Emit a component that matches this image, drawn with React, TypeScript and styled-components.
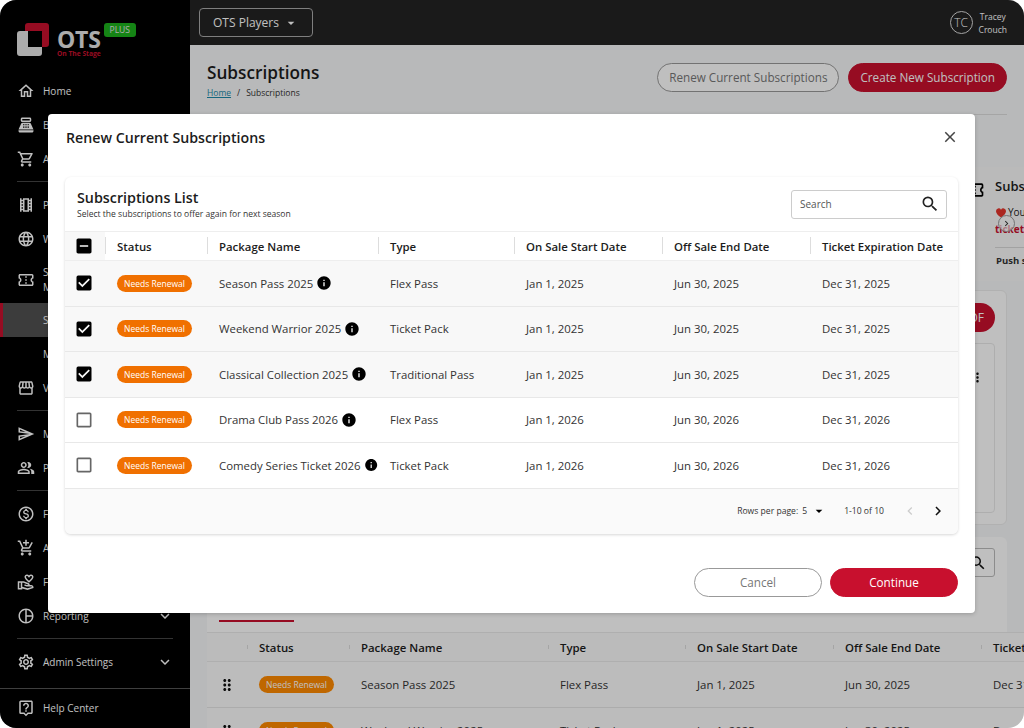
import { ReactNode } from "react";
import styled, { createGlobalStyle } from "styled-components";
import {
  MdOutlineHome,
  MdOutlinePointOfSale,
  MdOutlineShoppingCart,
  MdOutlineLocalMovies,
  MdOutlineLanguage,
  MdOutlineConfirmationNumber,
  MdOutlineStorefront,
  MdOutlineSend,
  MdOutlinePeopleAlt,
  MdOutlineMonetizationOn,
  MdOutlineAddShoppingCart,
  MdOutlineVolunteerActivism,
  MdOutlinePieChart,
  MdOutlineSettings,
  MdOutlineLiveHelp,
  MdExpandMore,
  MdArrowDropDown,
  MdSearch,
  MdClose,
  MdInfo,
  MdCheckBox,
  MdCheckBoxOutlineBlank,
  MdIndeterminateCheckBox,
  MdChevronLeft,
  MdChevronRight,
  MdDragIndicator,
  MdMoreVert,
} from "react-icons/md";

const GlobalStyle = createGlobalStyle`
  html, body {
    margin: 0;
    background: #fff;
    font-family: "Open Sans", "Liberation Sans", sans-serif;
  }
  * { box-sizing: border-box; }
`;

const Frame = styled.div`
  position: relative;
  display: flex;
  width: 1024px;
  height: 728px;
  border-radius: 16px;
  overflow: hidden;
  background: #f6f7f8;
`;

/* sidebar */
const Sidebar = styled.aside`
  display: flex;
  flex-direction: column;
  flex: 0 0 190px;
  background: #000;
  color: #fff;
`;
const LogoArea = styled.div`
  display: flex;
  height: 74px;
  padding: 23px 0 0 17px;
  flex: none;
`;
const LogoWords = styled.div`
  display: flex;
  flex-direction: column;
  margin: 5px 0 0 7px;
`;
const LogoName = styled.span`
  font-size: 23px;
  line-height: 22px;
  font-weight: 700;
  letter-spacing: -0.2px;
  color: #e6e6e6;
`;
const LogoTag = styled.span`
  font-size: 6.7px;
  line-height: 8px;
  font-weight: 700;
  color: #c8102e;
`;
const PlusBadge = styled.span`
  align-self: flex-start;
  margin-left: 3px;
  width: 32px;
  height: 14px;
  border-radius: 3px;
  background: #1cb01c;
  color: #e6e6e6;
  font-size: 8.5px;
  line-height: 14px;
  text-align: center;
`;
const NavItem = styled.div<{ $active?: boolean; $tall?: boolean }>`
  position: relative;
  display: flex;
  align-items: center;
  flex: none;
  height: ${(p) => (p.$tall ? "47px" : "34px")};
  padding: 0 16px 0 17px;
  gap: 8px;
  background: ${(p) => (p.$active ? "#505050" : "transparent")};
  box-shadow: ${(p) => (p.$active ? "inset 3px 0 0 #c8102e" : "none")};
  font-size: 10px;
  line-height: 15px;
  svg {
    flex: none;
  }
`;
const NavLabel = styled.span<{ $inset?: boolean }>`
  flex: 1;
  white-space: pre-line;
  margin-left: ${(p) => (p.$inset ? "26px" : "0")};
`;
const NavRule = styled.hr`
  flex: none;
  width: 156px;
  height: 1px;
  margin: 5px 0 6px 17px;
  border: 0;
  background: #444;
`;
const HelpArea = styled.div`
  margin-top: auto;
  border-top: 1px solid #555;
  padding-top: 2px;
  height: 40px;
`;

const Nav = ({
  icon,
  label,
  more,
  tall,
}: {
  icon: ReactNode;
  label: string;
  more?: boolean;
  tall?: boolean;
}) => (
  <NavItem $tall={tall}>
    {icon}
    <NavLabel>{label}</NavLabel>
    {more && <MdExpandMore size={18} />}
  </NavItem>
);

/* page under the dialog */
const Main = styled.div`
  display: flex;
  flex-direction: column;
  flex: 1;
  min-width: 0;
  overflow: hidden;
`;
const TopBar = styled.header`
  display: flex;
  align-items: center;
  justify-content: space-between;
  flex: none;
  height: 45px;
  padding: 0 17px 0 9px;
  background: #232323;
  color: #fff;
`;
const PlayersButton = styled.div`
  display: flex;
  align-items: center;
  justify-content: center;
  gap: 4px;
  width: 114px;
  height: 29px;
  border: 1px solid #aaa;
  border-radius: 4px;
  font-size: 12px;
`;
const UserBox = styled.div`
  display: flex;
  align-items: center;
  gap: 6px;
`;
const Avatar = styled.div`
  display: flex;
  align-items: center;
  justify-content: center;
  width: 23px;
  height: 23px;
  border: 1px solid #ddd;
  border-radius: 50%;
  font-size: 12px;
  font-weight: 300;
`;
const UserName = styled.div`
  font-size: 8.5px;
  line-height: 13px;
  text-align: center;
`;
const Content = styled.div`
  padding: 0 17px;
`;
const PageHead = styled.div`
  display: flex;
  align-items: flex-start;
  justify-content: space-between;
  height: 70px;
  padding-top: 17px;
  border-bottom: 1px solid #dcdcdc;
`;
const PageTitle = styled.h1`
  margin: 0;
  font-size: 17.2px;
  line-height: 22px;
  font-weight: 600;
  color: #1c1c1c;
`;
const Crumbs = styled.div`
  font-size: 8.5px;
  line-height: 14px;
  margin-top: 2px;
  color: #333;
  a {
    color: #1c8aa8;
    text-decoration: underline;
    margin-right: 6px;
  }
  span {
    margin-right: 6px;
  }
`;
const HeadActions = styled.div`
  display: flex;
  gap: 9px;
  margin-top: 1px;
`;
const Pill = styled.div<{ $variant: "outline" | "solid"; $wide?: boolean }>`
  display: flex;
  align-items: center;
  justify-content: center;
  flex: none;
  height: 29px;
  padding: 0 ${(p) => (p.$wide ? "0" : "11px")} 2px;
  width: ${(p) => (p.$wide ? "128px" : "auto")};
  border-radius: 15px;
  font-size: 11.7px;
  font-weight: 500;
  white-space: nowrap;
  background: ${(p) => (p.$variant === "solid" ? "#c8102e" : "#fff")};
  color: ${(p) => (p.$variant === "solid" ? "#fff" : "#777")};
  border: 1px solid ${(p) => (p.$variant === "solid" ? "#c8102e" : "#999")};
`;
const SummaryStrip = styled.div`
  position: relative;
  display: flex;
  justify-content: flex-end;
  height: 114px;
  margin: 52px -17px 0 0;
  background: #f8f8f8;
  padding: 10px 0 0;
`;
const SummaryCard = styled.div`
  width: 29px;
  overflow: hidden;
  white-space: nowrap;
  color: #1c1c1c;
`;
const SummaryTitle = styled.div`
  font-size: 13px;
  line-height: 18px;
  font-weight: 600;
  margin-bottom: 11px;
`;
const SummaryText = styled.div`
  display: flex;
  align-items: center;
  font-size: 10px;
  line-height: 13px;
  gap: 2px;
  padding-left: 1px;
`;
const SummaryLink = styled.div`
  font-size: 10px;
  line-height: 14px;
  font-weight: 700;
  color: #c8102e;
  margin-top: 3px;
`;
const SummaryPush = styled.div`
  margin: 11px 0 0;
  padding: 7px 0 0 1px;
  border-top: 1px solid #d8d8d8;
  font-size: 9.5px;
  font-weight: 700;
  line-height: 12px;
  color: #333;
`;
const SummaryIcon = styled.div`
  margin: 3px 10px 0 0;
  color: #000;
`;
const ScrollButton = styled.div`
  position: absolute;
  top: 48px;
  right: 9px;
  display: flex;
  align-items: center;
  justify-content: center;
  width: 17px;
  height: 17px;
  border-radius: 50%;
  border: 1px solid #999;
  background: rgba(255, 255, 255, 0.6);
  color: #333;
`;
const Panel = styled.section`
  margin-top: 9px;
  height: 235px;
  padding: 12px 11px 11px;
  border-radius: 6px;
  background: #fff;
  border: 1px solid #ececec;
  display: flex;
  flex-direction: column;
  align-items: flex-end;
`;
const PanelCard = styled.div`
  display: flex;
  justify-content: flex-end;
  align-self: stretch;
  flex: 1;
  margin-top: 11px;
  padding: 26px 9px 0 0;
  border: 1px solid #e8e8e8;
  border-radius: 4px;
  color: #111;
`;
const PanelButton = styled.div`
  height: 29px;
  width: 100px;
  padding-right: 11px;
  border-radius: 15px;
  background: #c8102e;
  color: #fff;
  font-size: 12px;
  line-height: 29px;
  text-align: right;
`;
const ListCard = styled.section`
  margin-top: 12px;
  background: #fff;
  border-radius: 6px 6px 0 0;
  padding-top: 11px;
  height: 191px;
  overflow: visible;
`;
const ListTools = styled.div`
  display: flex;
  justify-content: flex-end;
  padding-right: 12px;
`;
const MiniSearch = styled.div`
  display: flex;
  align-items: center;
  justify-content: flex-end;
  width: 140px;
  height: 29px;
  padding-right: 7px;
  border: 1px solid #bbb;
  border-radius: 3px;
  color: #111;
`;
const TabMark = styled.div`
  width: 75px;
  height: 2px;
  margin: 43px 0 10px 12px;
  background: #c8102e;
`;
const BackGrid = styled.div`
  display: grid;
  grid-template-columns: 40px 102px 199px 137px 148px 148px 148px;
  width: 922px;
`;
const BackHeadRow = styled(BackGrid)`
  height: 30px;
  align-items: center;
  background: #fafafa;
  border-top: 1px solid #eaeaea;
  border-bottom: 1px solid #eaeaea;
`;
const BackRow = styled(BackGrid)`
  height: 46px;
  align-items: center;
  background: #fbfbfb;
  border-bottom: 1px solid #e6e6e6;
`;
const DragCell = styled.div`
  display: flex;
  justify-content: center;
  color: #111;
`;

/* dialog */
const Scrim = styled.div`
  position: absolute;
  inset: 0;
  background: rgba(0, 0, 0, 0.25);
`;
const Dialog = styled.div`
  position: absolute;
  left: 48px;
  top: 114px;
  display: flex;
  flex-direction: column;
  width: 927px;
  height: 499px;
  padding: 0 17px;
  border-radius: 4px;
  background: #fff;
  box-shadow: 0 1px 4px rgba(0, 0, 0, 0.2);
`;
const DialogHead = styled.div`
  display: flex;
  align-items: flex-start;
  justify-content: space-between;
  flex: none;
  height: 63px;
  padding-top: 13px;
`;
const DialogTitle = styled.h2`
  margin: 0 0 0 1px;
  font-size: 14.2px;
  line-height: 21px;
  font-weight: 600;
  color: #1c1c1c;
`;
const CloseButton = styled.div`
  display: flex;
  margin: 1px -1px 0 0;
  color: #444;
`;
const ListPanel = styled.div`
  display: flex;
  flex-direction: column;
  flex: none;
  height: 357px;
  border-radius: 6px;
  background: #fff;
  box-shadow: 0 1px 3px rgba(0, 0, 0, 0.16);
  overflow: hidden;
`;
const ListHead = styled.div`
  display: flex;
  align-items: flex-start;
  justify-content: space-between;
  flex: none;
  height: 55px;
  padding: 11px 11px 0 12px;
  border-bottom: 1px solid #eee;
`;
const ListTitle = styled.div`
  font-size: 14.3px;
  line-height: 20px;
  font-weight: 600;
  color: #1c1c1c;
`;
const ListSubtitle = styled.div`
  font-size: 8.55px;
  line-height: 13px;
  color: #333;
`;
const SearchBox = styled.div`
  display: flex;
  align-items: center;
  justify-content: space-between;
  width: 156px;
  height: 29px;
  margin-top: 2px;
  padding: 0 6px 2px 8px;
  border: 1px solid #ccc;
  border-radius: 3px;
  font-size: 10px;
  color: #555;
  svg {
    color: #222;
  }
`;
const Grid = styled.div`
  display: grid;
  grid-template-columns: 40px 102px 171px 136px 148px 148px 148px;
`;
const HeadRow = styled(Grid)`
  flex: none;
  height: 29px;
  align-items: stretch;
  border-bottom: 1px solid #eee;
`;
const Row = styled(Grid)<{ $selected?: boolean }>`
  flex: none;
  height: 45.5px;
  align-items: center;
  background: ${(p) => (p.$selected ? "#f8f8f8" : "#fff")};
  border-bottom: 1px solid #e8e8e8;
`;
const HeadCell = styled.div`
  display: flex;
  align-items: center;
  padding-left: 12px;
  font-size: 11.4px;
  font-weight: 600;
  color: #1c1c1c;
  white-space: nowrap;
  position: relative;
  &::before {
    content: "";
    position: absolute;
    left: 0;
    top: 5px;
    bottom: 6px;
    width: 1px;
    background: #ddd;
  }
`;
const BoxCell = styled.div<{ $head?: boolean }>`
  display: flex;
  align-items: center;
  justify-content: center;
  height: 100%;
  padding-right: 2px;
  background: ${(p) => (p.$head ? "#f8f8f8" : "transparent")};
  color: #000;
`;
const Cell = styled.div`
  display: flex;
  align-items: center;
  gap: 3px;
  padding-left: 12px;
  font-size: 11.4px;
  color: #333;
  white-space: nowrap;
`;
const StatusTag = styled.span<{ $behind?: boolean }>`
  display: inline-block;
  width: 75px;
  height: 17px;
  border-radius: 9px;
  background: ${(p) => (p.$behind ? "#ff8a00" : "#f07000")};
  color: #fff;
  font-size: 8.5px;
  line-height: 17px;
  text-align: center;
`;
const TableFoot = styled.div`
  display: flex;
  align-items: center;
  justify-content: flex-end;
  flex: 1;
  padding-right: 6px;
  background: #fafafa;
  font-size: 8.6px;
  color: #333;
`;
const RowsPerPage = styled.div`
  display: flex;
  align-items: center;
  gap: 4px;
  margin-right: 17px;
`;
const PageCount = styled.span`
  margin-right: 12px;
`;
const PageArrow = styled.div<{ $disabled?: boolean }>`
  display: flex;
  width: 28px;
  justify-content: center;
  color: ${(p) => (p.$disabled ? "#ccc" : "#111")};
`;
const DialogFoot = styled.div`
  display: flex;
  justify-content: flex-end;
  gap: 8px;
  margin-top: 34px;
`;

const LogoMark = () => (
  <svg width="33" height="33" viewBox="0 0 33 33" style={{ flex: "none" }}>
    <path
      d="M3 8h8v16h14v6a3 3 0 0 1-3 3H3a3 3 0 0 1-3-3V11a3 3 0 0 1 3-3z"
      fill="#e6e6e6"
    />
    <path
      d="M8 3a3 3 0 0 1 3-3h18a3 3 0 0 1 3 3v18a3 3 0 0 1-3 3h-4V8H8z"
      fill="#c8102e"
    />
  </svg>
);

const Heart = () => (
  <svg width="10" height="10" viewBox="0 0 24 22" style={{ flex: "none" }}>
    <path
      d="M12 22C5 16 0 12 0 6.500A6.500 6.500 0 0 1 12 3a6.500 6.500 0 0 1 12 3.500C24 12 19 16 12 22z"
      fill="#e5352b"
    />
  </svg>
);

type Sub = {
  name: string;
  type: string;
  start: string;
  end: string;
  expires: string;
  selected: boolean;
};

const subs: Sub[] = [
  { name: "Season Pass 2025", type: "Flex Pass", start: "Jan 1, 2025", end: "Jun 30, 2025", expires: "Dec 31, 2025", selected: true },
  { name: "Weekend Warrior 2025", type: "Ticket Pack", start: "Jan 1, 2025", end: "Jun 30, 2025", expires: "Dec 31, 2025", selected: true },
  { name: "Classical Collection 2025", type: "Traditional Pass", start: "Jan 1, 2025", end: "Jun 30, 2025", expires: "Dec 31, 2025", selected: true },
  { name: "Drama Club Pass 2026", type: "Flex Pass", start: "Jan 1, 2026", end: "Jun 30, 2026", expires: "Dec 31, 2026", selected: false },
  { name: "Comedy Series Ticket 2026", type: "Ticket Pack", start: "Jan 1, 2026", end: "Jun 30, 2026", expires: "Dec 31, 2026", selected: false },
];

const columns = ["Status", "Package Name", "Type", "On Sale Start Date", "Off Sale End Date", "Ticket Expiration Date"];

export default function App() {
  return (
    <>
      <GlobalStyle />
      <Frame>
        <Sidebar>
          <LogoArea>
            <LogoMark />
            <LogoWords>
              <LogoName>OTS</LogoName>
              <LogoTag>On The Stage</LogoTag>
            </LogoWords>
            <PlusBadge>PLUS</PlusBadge>
          </LogoArea>
          <Nav icon={<MdOutlineHome size={18} />} label="Home" />
          <Nav icon={<MdOutlinePointOfSale size={18} />} label="Box Office" />
          <Nav icon={<MdOutlineShoppingCart size={18} />} label="Add to Cart" />
          <NavRule />
          <Nav icon={<MdOutlineLocalMovies size={18} />} label="Productions" />
          <Nav icon={<MdOutlineLanguage size={18} />} label="Website" />
          <Nav tall icon={<MdOutlineConfirmationNumber size={18} />} label={"Subscription\nManagement"} />
          <NavItem $active>
            <NavLabel $inset>Subscriptions</NavLabel>
          </NavItem>
          <NavItem>
            <NavLabel $inset>Memberships</NavLabel>
          </NavItem>
          <Nav icon={<MdOutlineStorefront size={18} />} label="Venues" />
          <NavRule />
          <Nav icon={<MdOutlineSend size={18} />} label="Marketing" />
          <Nav icon={<MdOutlinePeopleAlt size={18} />} label="Patrons" />
          <NavRule />
          <Nav icon={<MdOutlineMonetizationOn size={18} />} label="Finance" />
          <Nav icon={<MdOutlineAddShoppingCart size={18} />} label="Add-ons" />
          <Nav icon={<MdOutlineVolunteerActivism size={18} />} label="Fundraising" />
          <Nav icon={<MdOutlinePieChart size={18} />} label="Reporting" more />
          <NavRule />
          <Nav icon={<MdOutlineSettings size={18} />} label="Admin Settings" more />
          <HelpArea>
            <Nav icon={<MdOutlineLiveHelp size={18} />} label="Help Center" />
          </HelpArea>
        </Sidebar>

        <Main>
          <TopBar>
            <PlayersButton>
              OTS Players <MdArrowDropDown size={16} />
            </PlayersButton>
            <UserBox>
              <Avatar>TC</Avatar>
              <UserName>
                Tracey
                <br />
                Crouch
              </UserName>
            </UserBox>
          </TopBar>
          <Content>
            <PageHead>
              <div>
                <PageTitle>Subscriptions</PageTitle>
                <Crumbs>
                  <a>Home</a>
                  <span>/</span>Subscriptions
                </Crumbs>
              </div>
              <HeadActions>
                <Pill $variant="outline">Renew Current Subscriptions</Pill>
                <Pill $variant="solid">Create New Subscription</Pill>
              </HeadActions>
            </PageHead>
            <SummaryStrip>
              <SummaryIcon>
                <MdOutlineConfirmationNumber size={20} />
              </SummaryIcon>
              <SummaryCard>
                <SummaryTitle>Subscriptions</SummaryTitle>
                <SummaryText>
                  <Heart /> You have
                </SummaryText>
                <SummaryLink>tickets</SummaryLink>
                <SummaryPush>Push subscriptions</SummaryPush>
              </SummaryCard>
              <ScrollButton>
                <MdChevronRight size={11} />
              </ScrollButton>
            </SummaryStrip>
            <Panel>
              <PanelButton>OF</PanelButton>
              <PanelCard>
                <MdMoreVert size={15} />
              </PanelCard>
            </Panel>
            <ListCard>
              <ListTools>
                <MiniSearch>
                  <MdSearch size={18} />
                </MiniSearch>
              </ListTools>
              <TabMark />
              <BackHeadRow>
                <span />
                {columns.map((c) => (
                  <HeadCell key={c}>{c}</HeadCell>
                ))}
              </BackHeadRow>
              {subs.slice(0, 2).map((s) => (
                <BackRow key={s.name}>
                  <DragCell>
                    <MdDragIndicator size={18} />
                  </DragCell>
                  <Cell>
                    <StatusTag $behind>Needs Renewal</StatusTag>
                  </Cell>
                  <Cell>{s.name}</Cell>
                  <Cell>{s.type}</Cell>
                  <Cell>{s.start}</Cell>
                  <Cell>{s.end}</Cell>
                  <Cell>{s.expires}</Cell>
                </BackRow>
              ))}
            </ListCard>
          </Content>
        </Main>

        <Scrim />
        <Dialog>
          <DialogHead>
            <DialogTitle>Renew Current Subscriptions</DialogTitle>
            <CloseButton>
              <MdClose size={18} />
            </CloseButton>
          </DialogHead>
          <ListPanel>
            <ListHead>
              <div>
                <ListTitle>Subscriptions List</ListTitle>
                <ListSubtitle>Select the subscriptions to offer again for next season</ListSubtitle>
              </div>
              <SearchBox>
                Search <MdSearch size={20} />
              </SearchBox>
            </ListHead>
            <HeadRow>
              <BoxCell $head>
                <MdIndeterminateCheckBox size={20} />
              </BoxCell>
              {columns.map((c) => (
                <HeadCell key={c}>{c}</HeadCell>
              ))}
            </HeadRow>
            {subs.map((s) => (
              <Row key={s.name} $selected={s.selected}>
                <BoxCell>
                  {s.selected ? <MdCheckBox size={20} /> : <MdCheckBoxOutlineBlank size={20} color="#666" />}
                </BoxCell>
                <Cell>
                  <StatusTag>Needs Renewal</StatusTag>
                </Cell>
                <Cell>
                  {s.name} <MdInfo size={16} color="#000" />
                </Cell>
                <Cell>{s.type}</Cell>
                <Cell>{s.start}</Cell>
                <Cell>{s.end}</Cell>
                <Cell>{s.expires}</Cell>
              </Row>
            ))}
            <TableFoot>
              <RowsPerPage>
                Rows per page: <span>5</span>
                <MdArrowDropDown size={16} color="#000" />
              </RowsPerPage>
              <PageCount>1-10 of 10</PageCount>
              <PageArrow $disabled>
                <MdChevronLeft size={16} />
              </PageArrow>
              <PageArrow>
                <MdChevronRight size={18} />
              </PageArrow>
            </TableFoot>
          </ListPanel>
          <DialogFoot>
            <Pill $variant="outline" $wide>Cancel</Pill>
            <Pill $variant="solid" $wide>Continue</Pill>
          </DialogFoot>
        </Dialog>
      </Frame>
    </>
  );
}
